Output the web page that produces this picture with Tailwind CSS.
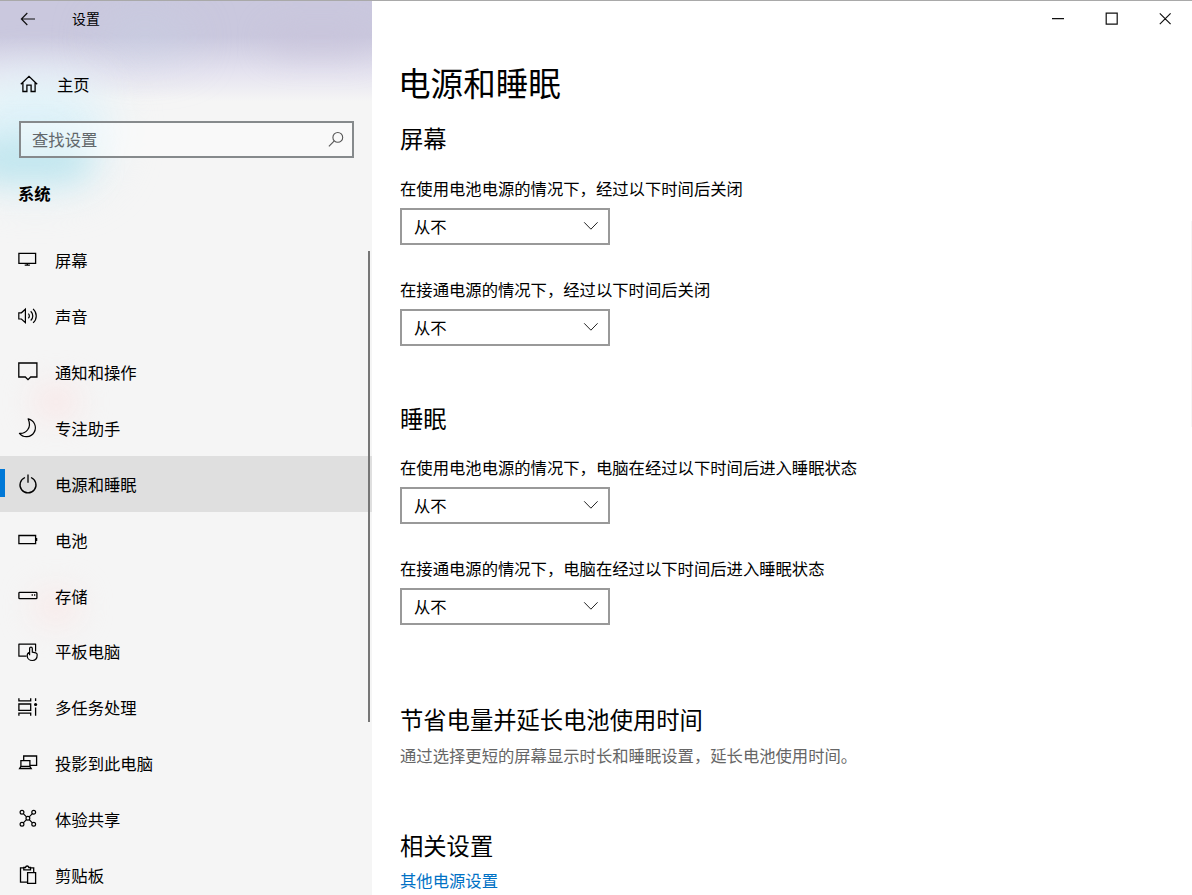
<!DOCTYPE html>
<html lang="zh-CN">

<head>
    <meta charset="UTF-8">
    <meta name="viewport" content="width=device-width, initial-scale=1.0">
    <title>设置</title>
    <script src="https://cdn.jsdelivr.net/npm/@tailwindcss/browser@4"></script>
</head>

<body class="h-screen overflow-hidden bg-white font-['Noto_Sans_CJK_SC',sans-serif] text-[16.33px] text-black">

    <div class="flex h-full border-t border-[#a9a9a9]">

        <!-- Sidebar -->
        <aside class="relative isolate flex h-full w-[372px] shrink-0 flex-col overflow-hidden bg-[#f5f5f5]">
            <!-- Acrylic tint -->
            <div class="absolute inset-0 -z-10 overflow-hidden">
                <div class="absolute inset-x-0 top-0 h-[100px] bg-linear-to-b from-[#cac8de] from-35% via-[#e4e2ef] via-70% to-[#f5f5f5]"></div>
                <div class="absolute top-[20px] left-[100px] h-[36px] w-[90px] rounded-full bg-[#c8d3e6]/50 blur-xl"></div>
                <div class="absolute top-[28px] left-[270px] h-[24px] w-[100px] rounded-full bg-[#c8c1d9]/60 blur-lg"></div>
                <div class="absolute top-[76px] -left-[40px] h-[110px] w-[150px] rounded-full bg-[#dff2f9] blur-xl"></div>
                <div class="absolute top-[138px] -left-[30px] h-[42px] w-[120px] rounded-full bg-[#b8e2eb]/80 blur-lg"></div>
                <div class="absolute top-[386px] left-[34px] h-[30px] w-[44px] rounded-full bg-[#fbe3e3]/90 blur-lg"></div>
                <div class="absolute top-[592px] left-[34px] h-[28px] w-[44px] rounded-full bg-[#fbe6e4]/90 blur-lg"></div>
            </div>

            <div class="flex h-[35px] shrink-0 items-center pl-[16px] text-[13.9px]">
                <svg class="size-6" viewBox="0 0 24 24" fill="none" stroke="#111" stroke-width="1.2"><path d="M19 12H5.5M11.3 6 5.4 12l5.9 6" /></svg>
                <span class="ml-[32px]">设置</span>
            </div>

            <div class="mt-[20px] flex h-[56px] shrink-0 items-center pl-[17px]">
                <svg class="size-6" viewBox="0 0 24 24" fill="none" stroke="#000" stroke-width="1.3"><path d="M3.8 12.2 12 4.3l8.2 7.9M5.9 10.4v9.1h4v-6.3h4.2v6.3h4v-9.1" /></svg>
                <span class="ml-[16px]">主页</span>
            </div>

            <div class="mt-[9px] ml-[19px] flex h-[37px] w-[335px] shrink-0 items-center justify-between border-2 border-[#868a8c] bg-white/45 pr-[4px] pb-px pl-[11px] text-[#62686b]">
                <span>查找设置</span>
                <svg class="size-6" viewBox="0 0 24 24" fill="none" stroke="#555" stroke-width="1.1"><circle cx="13.8" cy="10.4" r="4.9" /><path d="m10.3 13.9-5.4 5.5" /></svg>
            </div>

            <h2 class="mt-[23px] ml-[18px] h-6 shrink-0 leading-6 font-bold">系统</h2>

            <nav class="mt-[27.5px] shrink-0">
                <a class="flex h-[55.9px] items-center pl-[16px]">
                    <svg class="size-6" viewBox="0 0 24 24" fill="none" stroke="#000" stroke-width="1.3"><path d="M2.9 5.4h16.7v9.9H2.9zM11.3 15.3v1.8M8.7 17.2h5.2" /></svg>
                    <span class="ml-[15px]">屏幕</span>
                </a>
                <a class="flex h-[55.9px] items-center pl-[16px]">
                    <svg class="size-6" viewBox="0 0 24 24" fill="none" stroke="#000" stroke-width="1.2"><path d="M2.8 8.8h2.6l4-3.6v13.4l-4-3.6H2.8zM12.3 9.6c1.4 1.3 1.4 3.3 0 4.6M14.7 7.3c2.8 2.7 2.8 6.5 0 9.2M17.1 4.9c4.2 4 4.2 10 0 14" /></svg>
                    <span class="ml-[15px]">声音</span>
                </a>
                <a class="flex h-[55.9px] items-center pl-[16px]">
                    <svg class="size-6" viewBox="0 0 24 24" fill="none" stroke="#000" stroke-width="1.3"><path d="M2.8 3h18.1v14h-6.2L12 19.7 9.3 17H2.8z" /></svg>
                    <span class="ml-[15px]">通知和操作</span>
                </a>
                <a class="flex h-[55.9px] items-center pl-[16px]">
                    <svg class="size-6" viewBox="0 0 24 24" fill="none" stroke="#000" stroke-width="1.2" stroke-linejoin="round"><path d="M12.2 2.9a9 9 0 1 1-8.8 14.5c6.3.5 12.8-5.4 8.8-14.5z" /></svg>
                    <span class="ml-[15px]">专注助手</span>
                </a>
                <a class="relative flex h-[55.9px] items-center bg-[#dfdfdf] pl-[16px]">
                    <span class="absolute top-[13px] left-0 h-[28px] w-[5px] bg-[#0078d7]"></span>
                    <svg class="size-6" viewBox="0 0 24 24" fill="none" stroke="#000" stroke-width="1.3"><path d="M12 2.6v8.2M9 5.5a8 8 0 1 0 6 0" /></svg>
                    <span class="ml-[15px]">电源和睡眠</span>
                </a>
                <a class="flex h-[55.9px] items-center pl-[16px]">
                    <svg class="size-6" viewBox="0 0 24 24" fill="none" stroke="#000" stroke-width="1.3"><path d="M2.9 7.5h16.7v8.1H2.9zM20.6 10v3.1" /></svg>
                    <span class="ml-[15px]">电池</span>
                </a>
                <a class="flex h-[55.9px] items-center pl-[16px]">
                    <svg class="size-6" viewBox="0 0 24 24" fill="none" stroke="#000" stroke-width="1.3"><rect x="2.9" y="8.4" width="18" height="6.3" rx="0.8" /><path d="M15.6 11h1.3M18 11h1.3" /></svg>
                    <span class="ml-[15px]">存储</span>
                </a>
                <a class="flex h-[55.9px] items-center pl-[16px]">
                    <svg class="size-6" viewBox="0 0 24 24" fill="none" stroke="#000" stroke-width="1.2" stroke-linejoin="round"><path d="M10.6 16.2H2.9V4.1h16.7v7.4" /><path d="M13.6 15.2V8.6c0-1.9 2.7-1.9 2.7 0v3.6l3.5.7c1 .3 1.4.9 1.4 1.9 0 3.6-1.9 5.7-4.8 5.7-3 0-5.2-2-5.2-4.8 0-1.7.8-3 2.4-3.4" /></svg>
                    <span class="ml-[15px]">平板电脑</span>
                </a>
                <a class="flex h-[55.9px] items-center pl-[16px]">
                    <svg class="size-6" viewBox="0 0 24 24" fill="none" stroke="#000" stroke-width="1.3"><path d="M2.9 2.2v2.7h11.8V2.2M2.9 8h11.8v6.3H2.9zM2.9 19.8v-2.6h11.8v2.6M19.6 2.2v2.7M19.6 11.5v8.3" /><circle cx="19.6" cy="8.5" r="1.6" fill="#000" stroke="none" /></svg>
                    <span class="ml-[15px]">多任务处理</span>
                </a>
                <a class="flex h-[55.9px] items-center pl-[16px]">
                    <svg class="size-6" viewBox="0 0 24 24" fill="none" stroke="#000" stroke-width="1.3"><path d="M7.7 9V5h12.9v9.3h-6.1M4.9 15.5V9.7h9v5.8M4.9 15.3h9l1.3 2.2H3.6z" /></svg>
                    <span class="ml-[15px]">投影到此电脑</span>
                </a>
                <a class="flex h-[55.9px] items-center pl-[16px]">
                    <svg class="size-6" viewBox="0 0 24 24" fill="none" stroke="#000" stroke-width="1.2"><circle cx="6" cy="5.3" r="1.9" /><circle cx="17.7" cy="5.3" r="1.9" /><circle cx="6" cy="17.2" r="1.9" /><circle cx="17.7" cy="17.2" r="1.9" /><circle cx="11.9" cy="11.3" r="1.9" /><path d="m7.3 6.6 3.2 3.3m2.7 2.7 3.2 3.3m0-9.3-3.2 3.3m-2.7 2.7-3.2 3.3" /></svg>
                    <span class="ml-[15px]">体验共享</span>
                </a>
                <a class="flex h-[55.9px] items-center pl-[16px]">
                    <svg class="size-6" viewBox="0 0 24 24" fill="none" stroke="#000" stroke-width="1.3"><path d="M11.5 19.2h-7V4.9h3.3M14.5 4.9h3.2v4.5M7.8 6.9V4.5h1.7c.4-2 2.9-2 3.3 0h1.7v2.4zM11.6 9.6h8v10.7h-8z" /></svg>
                    <span class="ml-[15px]">剪贴板</span>
                </a>
            </nav>

            <!-- Scrollbar thumb -->
            <div class="absolute top-[250px] right-[2px] h-[471px] w-[2px] bg-[#767676]"></div>
        </aside>

        <!-- Main Content -->
        <main class="relative flex-1 pl-[28px]">
            <div class="absolute top-0 right-0 flex h-[37px] items-center">
                <svg class="h-[37px] w-[160px]" viewBox="0 0 160 37" fill="none" stroke="#111" stroke-width="1.2"><path d="M20 17.7h12M74.2 12.2h11v11h-11zM127.8 12.3l10.8 10.8M138.6 12.3l-10.8 10.8" /></svg>
            </div>
            <div class="absolute top-[220px] right-0 h-[206px] w-px bg-[#f6f6f6]"></div>

            <h1 class="mt-[57px] -ml-[2px] h-[48px] text-[32.6px] leading-[48px]">电源和睡眠</h1>

            <section>
                <h2 class="mt-[14px] h-[36px] text-[23.3px] leading-[36px]">屏幕</h2>
                <p class="mt-[20px] h-6 leading-6">在使用电池电源的情况下，经过以下时间后关闭</p>
                <button class="mt-[8px] flex h-[37px] w-[210px] items-center justify-between border-2 border-[#999] pr-[9px] pb-px pl-[12px]">
                    <span>从不</span>
                    <svg class="size-4" viewBox="0 0 16 16" fill="none" stroke="#222" stroke-width="1"><path d="m1.2 4.3 6.7 6.9 6.7-6.9" /></svg>
                </button>
                <p class="mt-[32px] h-6 leading-6">在接通电源的情况下，经过以下时间后关闭</p>
                <button class="mt-[8px] flex h-[37px] w-[210px] items-center justify-between border-2 border-[#999] pr-[9px] pb-px pl-[12px]">
                    <span>从不</span>
                    <svg class="size-4" viewBox="0 0 16 16" fill="none" stroke="#222" stroke-width="1"><path d="m1.2 4.3 6.7 6.9 6.7-6.9" /></svg>
                </button>
            </section>

            <section>
                <h2 class="mt-[54px] h-[36px] text-[23.3px] leading-[36px]">睡眠</h2>
                <p class="mt-[19px] h-6 leading-6">在使用电池电源的情况下，电脑在经过以下时间后进入睡眠状态</p>
                <button class="mt-[8px] flex h-[37px] w-[210px] items-center justify-between border-2 border-[#999] pr-[9px] pb-px pl-[12px]">
                    <span>从不</span>
                    <svg class="size-4" viewBox="0 0 16 16" fill="none" stroke="#222" stroke-width="1"><path d="m1.2 4.3 6.7 6.9 6.7-6.9" /></svg>
                </button>
                <p class="mt-[32px] h-6 leading-6">在接通电源的情况下，电脑在经过以下时间后进入睡眠状态</p>
                <button class="mt-[8px] flex h-[37px] w-[210px] items-center justify-between border-2 border-[#999] pr-[9px] pb-px pl-[12px]">
                    <span>从不</span>
                    <svg class="size-4" viewBox="0 0 16 16" fill="none" stroke="#222" stroke-width="1"><path d="m1.2 4.3 6.7 6.9 6.7-6.9" /></svg>
                </button>
            </section>

            <section>
                <h2 class="mt-[76px] h-[36px] text-[23.3px] leading-[36px]">节省电量并延长电池使用时间</h2>
                <p class="mt-[6px] h-6 leading-6 text-[#666]">通过选择更短的屏幕显示时长和睡眠设置，延长电池使用时间。</p>
            </section>

            <section>
                <h2 class="mt-[60px] h-[36px] text-[23.3px] leading-[36px]">相关设置</h2>
                <a class="mt-[5px] block h-6 leading-6 text-[#0071c5]">其他电源设置</a>
            </section>
        </main>
    </div>

</body>

</html>
